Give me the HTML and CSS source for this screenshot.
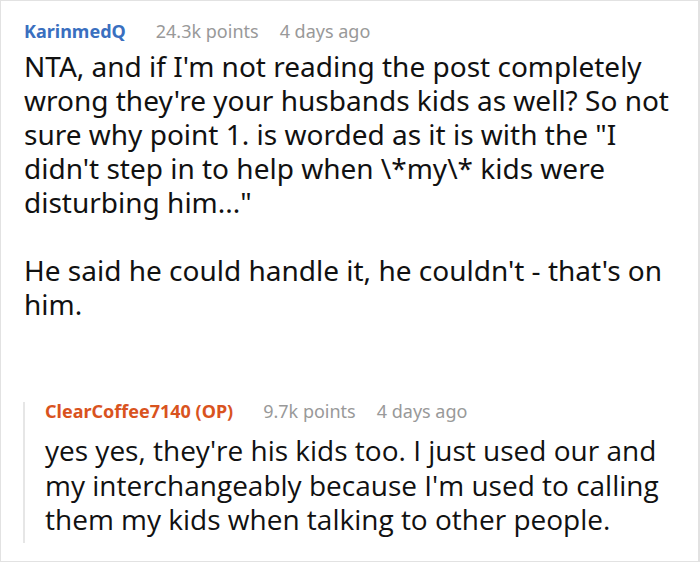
FILE: index.html
```html
<!DOCTYPE html>
<html>
<head>
<meta charset="utf-8">
<link rel="stylesheet" href="styles.css">
</head>
<body>
<div class="frame">
  <div class="comment">
    <div class="meta">
      <span class="author">KarinmedQ</span>
      <span class="points">24.3k points</span>
      <span class="time">4 days ago</span>
    </div>
    <div class="body">
      <p>NTA, and if I'm not reading the post completely wrong they're your husbands kids as well? So not sure why point 1. is worded as it is with the "I didn't step in to help when \*my\* kids were disturbing him..."</p>
      <p>He said he could handle it, he couldn't - that's on him.</p>
    </div>
    <div class="reply">
      <div class="meta">
        <span class="author op">ClearCoffee7140 (OP)</span>
        <span class="points">9.7k points</span>
        <span class="time">4 days ago</span>
      </div>
      <div class="reply-body">
        <p>yes yes, they're his kids too. I just used our and my interchangeably because I'm used to calling them my kids when talking to other people.</p>
      </div>
    </div>
  </div>
</div>
</body>
</html>
```
FILE: styles.css
```css
html, body {
  margin: 0;
  padding: 0;
  background: #fff;
}
.frame {
  width: 700px;
  height: 562px;
  box-sizing: border-box;
  border: 1px solid #e2e2e2;
  border-right-width: 2px;
  overflow: hidden;
  font-family: "Noto Sans", "Open Sans", sans-serif;
  color: #111;
}
.comment {
  padding: 18px 8px 0 23px;
}
.meta {
  display: flex;
  align-items: center;
  height: 24px;
  font-size: 18px;
  line-height: 24px;
  white-space: nowrap;
}
.author {
  font-weight: bold;
  color: #3a6fbf;
  margin-right: 30px;
}
.author.op {
  color: #d9531e;
}
.points {
  color: #999;
  margin-right: 21px;
}
.time {
  color: #999;
}
.body {
  margin-top: 6px;
  font-size: 28px;
  line-height: 34px;
}
.body p, .reply-body p {
  margin: 0 0 34px 0;
}
.body p:last-child, .reply-body p:last-child {
  margin-bottom: 0;
}
.reply {
  margin-top: 81px;
  margin-left: -1px;
  border-left: 2px solid #e6e6e6;
  padding-left: 20px;
  padding-bottom: 6px;
}
.reply .meta {
  height: 18px;
  line-height: 18px;
}
.reply-body {
  margin-top: 13px;
  padding-right: 20px;
  font-family: "Open Sans", "Noto Sans", sans-serif;
  font-stretch: 88%;
  font-size: 28px;
  line-height: 34.5px;
}
```
